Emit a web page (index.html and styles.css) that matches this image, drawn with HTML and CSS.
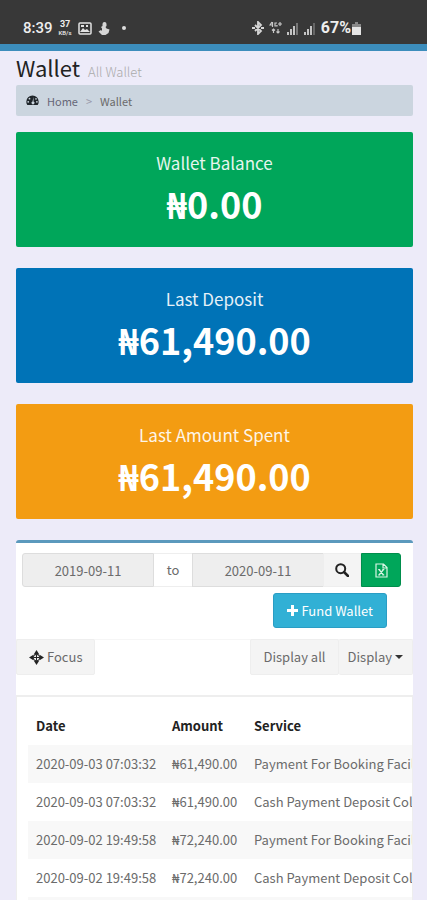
FILE: index.html
```
<!DOCTYPE html>
<html lang="en">
<head>
    <meta charset="UTF-8">
    <meta name="viewport" content="width=device-width, initial-scale=1.0">
    <title>Wallet</title>
    <link rel="stylesheet" href="styles.css">
</head>
<body>

<!-- Phone status bar -->
<div class="status-bar">
    <div class="status-left">
        <span>8:39</span>
        <span class="net-speed"><b>37</b><small>KB/s</small></span>
        <svg width="14" height="13" viewBox="0 0 14 13">
            <rect x="1" y="1" width="12" height="11" rx="1" fill="none" stroke="#e2e2e2" stroke-width="1.5"/>
            <path d="M2 10l3-4 2 2 2-1 3 3z" fill="#e2e2e2"/>
            <path d="M3 3h3v2H3zM8 3h2v2H8z" fill="#e2e2e2"/>
        </svg>
        <svg width="12" height="13" viewBox="0 0 12 13" fill="#d6d6d6">
            <path d="M4.500 2a2 2 0 0 1 4 0v2l-1 1 1 1.500 3 1-1 3.500-3 2H4L.5 9.500 3 8l1 1V6.500L3 5l1.500-1z"/>
        </svg>
        <span class="dot"></span>
    </div>
    <div class="status-right">
        <svg width="12" height="14" viewBox="0 0 12 14" fill="none" stroke="#d6d6d6" stroke-width="1.800">
            <path d="M3 4l6 6-3 3V1l3 3-6 6M0 7h3M9 7h3"/>
        </svg>
        <svg width="13" height="14" viewBox="0 0 13 14" fill="none" stroke="#c8c8c8" stroke-width="1.200">
            <path d="M3 1L1 4h3M3.500 1v5M8 2H6v3h2V4M11 1v4M9 3h4"/>
            <path d="M4.500 8v4M3 9.500l1.500-1.500L6 9.500M9 8v4M7.500 10.500L9 12l1.500-1.500"/>
        </svg>
        <svg width="12" height="13" viewBox="0 0 12 13">
            <path d="M0 10h2v3H0zM3 7h2v6H3zM6 4h2v9H6z" fill="#c4c4c4"/>
            <path d="M9 1h2v12H9z" fill="#777"/>
        </svg>
        <svg width="12" height="13" viewBox="0 0 12 13">
            <path d="M0 10h2v3H0zM3 7h2v6H3zM6 4h2v9H6z" fill="#c4c4c4"/>
            <path d="M9 1h2v12H9z" fill="#666"/>
        </svg>
        <span class="battery">67%
            <svg width="9" height="13" viewBox="0 0 9 13">
                <path d="M3 0h3v2h3v3H0V2h3z" fill="#888"/>
                <path d="M0 5h9v8H0z" fill="#e6e6e6"/>
            </svg>
        </span>
    </div>
</div>

<main class="content">
    <h1 class="page-title">Wallet <small>All Wallet</small></h1>

    <nav class="breadcrumb">
        <svg width="13" height="11" viewBox="0 0 13 11">
            <path d="M6.500.5A6.200 6.200 0 0 0 .3 6.700c0 1.300.3 2.300 1 3.300h10.400c.7-1 1-2 1-3.300A6.200 6.200 0 0 0 6.500.5z" fill="#20262b"/>
            <path d="M7.500 2L6.500 6.500a1.500 1.500 0 1 0 1 0z" fill="#cbd5df"/>
            <circle cx="2.200" cy="6.800" r=".9" fill="#cbd5df"/>
            <circle cx="3.500" cy="3.700" r=".9" fill="#cbd5df"/>
            <circle cx="10" cy="3.900" r=".8" fill="#cbd5df"/>
            <circle cx="10.900" cy="6.800" r=".9" fill="#cbd5df"/>
        </svg>
        <a href="#">Home</a>
        <span class="sep">&gt;</span>
        <span>Wallet</span>
    </nav>

    <section class="card green">
        <p>Wallet Balance</p>
        <strong>₦0.00</strong>
    </section>
    <section class="card blue">
        <p>Last Deposit</p>
        <strong>₦61,490.00</strong>
    </section>
    <section class="card orange">
        <p>Last Amount Spent</p>
        <strong>₦61,490.00</strong>
    </section>

    <section class="panel">
        <form class="date-range">
            <input type="text" value="2019-09-11" aria-label="From date" readonly>
            <span class="to">to</span>
            <input type="text" value="2020-09-11" aria-label="To date" readonly>
            <button type="button" class="search-btn" aria-label="Search">
                <svg width="14" height="14" viewBox="0 0 14 14" fill="none" stroke="#222">
                    <circle cx="5.700" cy="5.700" r="4.500" stroke-width="2"/>
                    <path d="M9 9l4 4" stroke-width="2.500" stroke-linecap="round"/>
                </svg>
            </button>
            <button type="button" class="excel-btn" aria-label="Export to Excel">
                <svg width="13" height="15" viewBox="0 0 13 15" fill="none" stroke="#d9f5e5" stroke-width="1.200">
                    <path d="M1 1h7.500L12 4.500V14H1zM8 1v4h4"/>
                    <path d="M4 6.500l4.500 5.500M8.500 6.500L4 12M3.200 6.500h2M7.300 6.500h2M3.200 12h2M7.300 12h2"/>
                </svg>
            </button>
        </form>
        <div class="fund-row">
            <button type="button" class="fund-btn">
                <svg width="11" height="11" viewBox="0 0 11 11"><path d="M4 0h3v4h4v3H7v4H4V7H0V4h4z" fill="#fff"/></svg>
                Fund Wallet
            </button>
        </div>
        <div class="toolbar">
            <button type="button" class="tool-btn">
                <svg width="15" height="15" viewBox="0 0 15 15">
                    <path d="M7.500 0L10 4H5zM15 7.500L11 10V5zM7.500 15L5 11h5zM0 7.500L4 5v5z" fill="#222"/>
                    <path d="M7.500 3v9M3 7.500h9" stroke="#222" stroke-width="1"/>
                    <circle cx="7.500" cy="7.500" r="3.200" fill="none" stroke="#333" stroke-width="1.200"/>
                </svg>
                Focus
            </button>
            <div class="btn-group">
                <button type="button" class="tool-btn">Display all</button>
                <button type="button" class="tool-btn">Display <span class="caret"></span></button>
            </div>
        </div>
    </section>

    <section class="table-box">
        <table>
            <thead>
                <tr><th>Date</th><th>Amount</th><th>Service</th></tr>
            </thead>
            <tbody>
                <tr><td>2020-09-03 07:03:32</td><td>₦61,490.00</td><td>Payment For Booking Facility</td></tr>
                <tr><td>2020-09-03 07:03:32</td><td>₦61,490.00</td><td>Cash Payment Deposit Collected</td></tr>
                <tr><td>2020-09-02 19:49:58</td><td>₦72,240.00</td><td>Payment For Booking Facility</td></tr>
                <tr><td>2020-09-02 19:49:58</td><td>₦72,240.00</td><td>Cash Payment Deposit Collected</td></tr>
                <tr><td></td><td></td><td></td></tr>
            </tbody>
        </table>
    </section>
</main>

</body>
</html>
```

FILE: styles.css
```
* {
    box-sizing: border-box;
}
body {
    margin: 0;
    height: 100vh;
    display: flex;
    flex-direction: column;
    overflow: hidden;
    background-color: #edebf9;
    color: #6b6b6b;
    font-family: "Noto Sans CJK SC", "Noto Sans", sans-serif;
    font-size: 13px;
    line-height: 20px;
}
button, input {
    font: inherit;
    color: inherit;
    margin: 0;
}
button {
    display: flex;
    align-items: center;
    justify-content: center;
    cursor: pointer;
}
svg {
    flex-shrink: 0;
}

/* status bar */
.status-bar {
    flex-shrink: 0;
    display: flex;
    justify-content: space-between;
    height: 51px;
    padding: 12px 66px 0 23px;
    background-color: #383838;
    border-bottom: 7px solid #3c8dbc;
    color: #eee;
    font-family: Roboto, sans-serif;
    font-size: 15px;
    font-weight: 500;
}
.status-left, .status-right {
    display: flex;
    align-items: center;
    height: 32px;
}
.status-left {
    gap: 6px;
}
.status-right {
    gap: 5px;
}
.net-speed {
    display: flex;
    flex-direction: column;
    align-items: center;
    font-size: 9px;
    line-height: 9px;
}
.net-speed small {
    font-size: 6px;
    line-height: 7px;
}
.dot {
    width: 4px;
    height: 4px;
    margin-left: 6px;
    border-radius: 50%;
    background-color: #ddd;
}
.battery {
    display: flex;
    align-items: center;
    gap: 1px;
    font-size: 16px;
    font-weight: 700;
}

/* page */
.content {
    flex: 1;
    overflow-y: auto;
    scrollbar-width: none;
    padding: 0 14px 0 16px;
}
.page-title {
    margin: 0 0 2px;
    font-size: 22px;
    font-weight: 400;
    line-height: 32px;
    color: #222;
}
.page-title small {
    margin-left: 3px;
    font-size: 13px;
    font-weight: 300;
    line-height: 20px;
    color: #aaa;
}
.breadcrumb {
    display: flex;
    align-items: center;
    height: 31px;
    margin-bottom: 16px;
    padding: 0 10px;
    background-color: #cbd5df;
    border-radius: 2px;
    font-size: 11px;
    line-height: 18px;
}
.breadcrumb a {
    margin-left: 8px;
    color: #667;
    text-decoration: none;
}
.breadcrumb .sep {
    margin: 0 8px;
    color: #99a;
}

.card {
    margin-bottom: 21px;
    padding: 18px 10px 16px;
    border-radius: 2px;
    color: #fff;
    text-align: center;
}
.card p {
    margin: 0;
    font-size: 17px;
    line-height: 26px;
    opacity: 0.9;
}
.card strong {
    display: block;
    font-size: 36px;
    line-height: 55px;
}
.green {
    background-color: #00a65a;
}
.blue {
    background-color: #0073b7;
}
.orange {
    background-color: #f39c12;
}

.panel {
    padding-bottom: 20px;
    background-color: #fff;
    border-top: 3px solid #5b99bd;
    border-radius: 3px 3px 0 0;
}
.date-range {
    display: flex;
    margin: 0;
    padding: 10px 12px 6px 6px;
}
.date-range input {
    flex: 1;
    min-width: 0;
    height: 34px;
    padding: 0 6px;
    border: 1px solid #ddd;
    background-color: #eee;
    border-radius: 3px 0 0 3px;
    text-align: center;
}
.date-range .to + input {
    border-right: none;
    border-radius: 0;
}
.to {
    width: 38px;
    border: 1px solid #eee;
    border-width: 1px 0;
    line-height: 32px;
    text-align: center;
}
.search-btn {
    width: 38px;
    padding: 0;
    border: 1px solid #eee;
    background-color: #f4f4f4;
}
.excel-btn {
    width: 40px;
    padding: 0;
    border: 1px solid #008d4c;
    border-radius: 0 3px 3px 0;
    background-color: #00a65a;
}
.fund-row {
    display: flex;
    justify-content: flex-end;
    padding: 0 26px 11px 0;
}
.fund-btn {
    gap: 3px;
    height: 35px;
    padding: 0 13px;
    border: 1px solid #2a9dc4;
    border-radius: 3px;
    background-color: #31b0d5;
    color: #fff;
}
.toolbar {
    display: flex;
    justify-content: space-between;
    box-shadow: inset 0 1px 0 #f6f6f6;
}
.tool-btn {
    gap: 3px;
    height: 36px;
    padding: 0 12px;
    border: 1px solid #eee;
    border-radius: 2px;
    background-color: #f4f4f4;
}
.btn-group {
    display: flex;
}
.btn-group .tool-btn + .tool-btn {
    padding: 0 9px;
    border-left: none;
}
.caret {
    border: 4px solid transparent;
    border-top-color: #333;
    border-bottom: none;
}

.table-box {
    overflow: hidden;
    padding: 10px 1px 0 11px;
    background-color: #fff;
    border: 1px solid #eee;
    border-top: 2px solid #eee;
}
table {
    width: 480px;
    border-collapse: collapse;
    table-layout: fixed;
}
th, td {
    height: 38px;
    padding: 0 8px;
    text-align: left;
    white-space: nowrap;
}
th {
    color: #222;
    font-weight: 700;
}
th:nth-child(1) {
    width: 136px;
}
th:nth-child(2) {
    width: 82px;
}
tbody tr:nth-child(odd) {
    background-color: #f8f8f8;
}
```
